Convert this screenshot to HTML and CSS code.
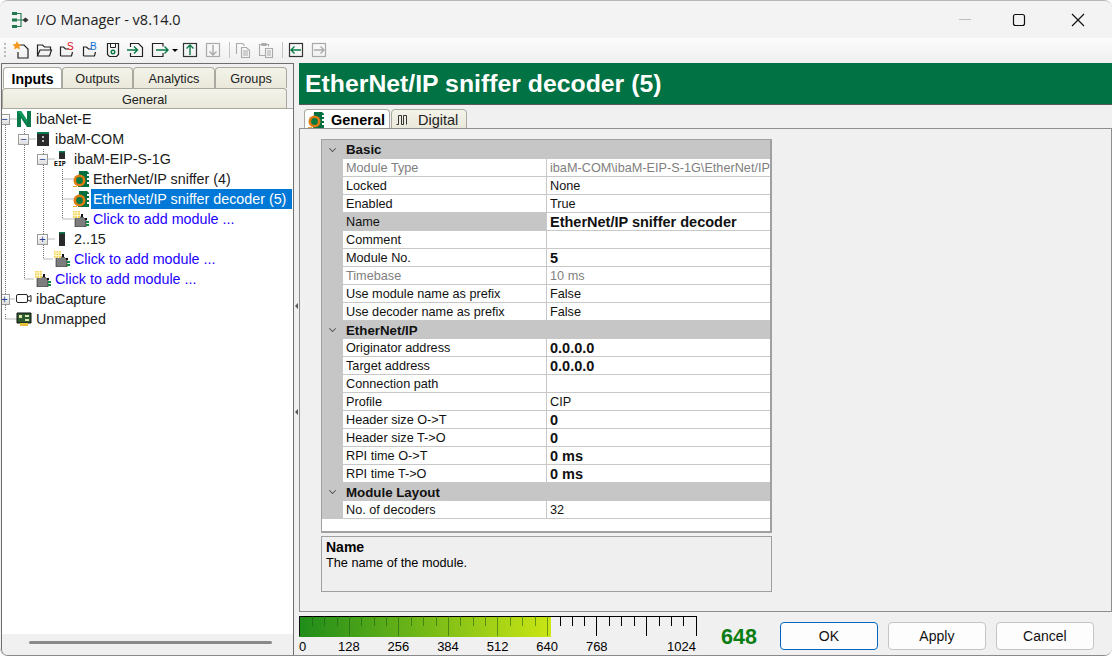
FILE: index.html
```html
<!DOCTYPE html>
<html lang="en">
<head>
    <meta charset="UTF-8">
    <meta name="viewport" content="width=device-width, initial-scale=1.0">
    <title>I/O Manager</title>
    <link rel="stylesheet" href="styles.css">
</head>
<body>
    <svg class="defs" width="0" height="0">
        <symbol id="chip" viewBox="0 0 16 16">
            <path d="M6 0h8l2 2v1h-2v2h2v2h-2v2h2v2h-2v2h2v3H5z" fill="#006f3f"/>
            <circle cx="6.500" cy="9.500" r="6" fill="#e07b10"/>
            <circle cx="6.500" cy="9.500" r="3.400" fill="#0b7a3f"/>
            <path d="M0 15h4v1H0z" fill="#e8a33a"/>
        </symbol>
        <symbol id="addmod" viewBox="0 0 16 16">
            <path d="M2 6h8l3 3v7H2z" fill="#7d7d7d" stroke="#222" stroke-width=".6"/>
            <path d="M8 3h2v3H8zM12 7h2v2h-2z" fill="#111"/>
            <path d="M13 10h3v2h-3zM13 13h3v2h-3z" fill="#0a8a3a"/>
            <path d="M0 0h7v7H0z" fill="#f4d35a"/>
            <path d="M0 2h7M0 4.500h7M2 0v7M4.500 0v7" stroke="#fff6c8"/>
        </symbol>
    </svg>

    <div class="window">
        <div class="titlebar">
            <svg class="app-icon" width="18" height="18" viewBox="0 0 18 18">
                <path d="M4 2.500h6v13H4M4 9h8" fill="none" stroke="#1e7a4c" stroke-width="1.100"/>
                <path d="M1 1h5v3H1zM1 7.500h5v3H1zM1 14h5v3H1z" fill="#1e7a4c"/>
                <path d="M11.500 9l3-2.500 3 2.500-3 2.500z" fill="#333"/>
            </svg>
            <span class="app-title">I/O Manager - v8.14.0</span>
            <div class="win-btns">
                <svg width="46" height="38" viewBox="0 0 46 38"><path d="M16 18.500h12" stroke="#bdbdbd"/></svg>
                <svg width="60" height="38" viewBox="0 0 60 38"><rect x="24.500" y="13.500" width="11" height="11" rx="2" fill="none" stroke="#111" stroke-width="1.200"/></svg>
                <svg width="58" height="38" viewBox="0 0 58 38"><path d="M23 13l12 12M35 13L23 25" stroke="#111" stroke-width="1.200"/></svg>
            </div>
        </div>

        <div class="toolbar">
            <span class="grip"></span>
            <svg class="tool" viewBox="0 0 20 20"><path d="M8 5h5l4 4v9H7v-6" fill="none" stroke="#222" stroke-width="1.200"/><path d="M6 1l1.500 3 3 .4-2.200 2.100.6 3L6 8l-2.900 1.500.6-3L1.500 4.400l3-.4z" fill="#f39a1e"/></svg>
            <svg class="tool" viewBox="0 0 20 20"><path d="M3.500 16V5h5l2 2h6v3M3.500 16h12l2-6H6l-2.500 6z" fill="none" stroke="#222" stroke-width="1.200"/></svg>
            <svg class="tool" viewBox="0 0 20 20"><path d="M3.500 16V7h3l2 2h3M3.500 16h11l1-4" fill="none" stroke="#222" stroke-width="1.200"/><text x="10" y="10" class="tool-s">S</text></svg>
            <svg class="tool" viewBox="0 0 20 20"><path d="M3.500 16V7h3l2 2h3M3.500 16h11l1-4" fill="none" stroke="#222" stroke-width="1.200"/><text x="10" y="10" class="tool-b">B</text></svg>
            <svg class="tool" viewBox="0 0 20 20"><path d="M4.500 3.500h11v11l-2 2h-7l-2-2z" fill="none" stroke="#222" stroke-width="1.200"/><path d="M7.500 3.500v4h5v-4" fill="none" stroke="#222"/><circle cx="10" cy="12" r="1.800" fill="none" stroke="#0a7a45" stroke-width="1.400"/></svg>
            <svg class="tool" viewBox="0 0 20 20"><path d="M4.500 7V3.500h8l4 4v9h-12V13" fill="none" stroke="#222" stroke-width="1.200"/><path d="M1 10h10M8 6.500l3.500 3.500L8 13.500" fill="none" stroke="#0a7a45" stroke-width="1.400"/></svg>
            <svg class="tool tool-wide" viewBox="0 0 20 20"><path d="M14 6.500V3.500H3.500v13H14V13" fill="none" stroke="#222" stroke-width="1.200"/><path d="M7 10h12M15.500 6.500L19 10l-3.500 3.500" fill="none" stroke="#0a7a45" stroke-width="1.400"/></svg>
            <span class="caret"></span>
            <svg class="tool" viewBox="0 0 20 20"><rect x="3.500" y="3.500" width="13" height="13" fill="none" stroke="#333" stroke-width="1.200"/><path d="M10 15V5M6.500 8.500L10 5l3.500 3.500" fill="none" stroke="#0a7a45" stroke-width="1.400"/></svg>
            <svg class="tool" viewBox="0 0 20 20"><rect x="3.500" y="3.500" width="13" height="13" fill="none" stroke="#aaa" stroke-width="1.200"/><path d="M10 5v10M6.500 11.500L10 15l3.500-3.500" fill="none" stroke="#aaa" stroke-width="1.400"/></svg>
            <span class="tool-sep"></span>
            <svg class="tool" viewBox="0 0 20 20"><path d="M3.500 14V3.500h6l2 2M8.500 7.500h5l3 3v7h-8z" fill="none" stroke="#aaa" stroke-width="1.100"/><path d="M10 11h5M10 13h5M10 15h5" stroke="#aaa"/></svg>
            <svg class="tool" viewBox="0 0 20 20"><path d="M9 15.500H3.500V4.500h9v2M6 3.500h4v2H6z" fill="none" stroke="#aaa" stroke-width="1.100"/><path d="M9.500 8.500h7v9h-7z" fill="none" stroke="#aaa" stroke-width="1.100"/><path d="M11 11h4M11 13h4M11 15h4" stroke="#aaa"/></svg>
            <span class="tool-sep"></span>
            <svg class="tool" viewBox="0 0 20 20"><rect x="3.500" y="3.500" width="13" height="13" fill="none" stroke="#333" stroke-width="1.200"/><path d="M15 10H5M8.500 6.500L5 10l3.500 3.500" fill="none" stroke="#0a7a45" stroke-width="1.400"/></svg>
            <svg class="tool" viewBox="0 0 20 20"><rect x="3.500" y="3.500" width="13" height="13" fill="none" stroke="#aaa" stroke-width="1.200"/><path d="M5 10h10M11.500 6.500L15 10l-3.500 3.500" fill="none" stroke="#aaa" stroke-width="1.400"/></svg>
        </div>

        <div class="workspace">
            <div class="left-panel">
                <div class="side-tabs">
                    <div class="side-tab active tab-inputs">Inputs</div>
                    <div class="side-tab tab-outputs">Outputs</div>
                    <div class="side-tab tab-analytics">Analytics</div>
                    <div class="side-tab tab-groups">Groups</div>
                </div>
                <div class="side-tab tab-general">General</div>

                <div class="tree">
                    <!-- dotted connectors sit over the rows -->
                    <svg class="tree-lines" width="290" height="230" viewBox="0 0 290 230">
                        <path d="M3.500 10V202M3.500 10h11M3.500 190h9M3.500 210V204M3.500 210h11M22.500 20V170M22.500 30h11M22.500 170h10M41.500 40V150M41.500 50h11M41.500 130h11M41.500 150h10M60.500 60V110M60.500 70h11M60.500 90h11M60.500 110h11" fill="none" stroke="#777" stroke-dasharray="1 1"/>
                    </svg>
                    <div class="tree-row lvl0">
                        <span class="expander">−</span>
                        <svg class="node-icon" viewBox="0 0 16 16"><path d="M1 0h4l6 9V0h4v16h-4L5 7v9H1z" fill="#0a7a4a"/><path d="M1 0h4l6 9 0 3z" fill="#0f9a5c"/></svg>
                        <span>ibaNet-E</span>
                    </div>
                    <div class="tree-row lvl1">
                        <span class="expander">−</span>
                        <svg class="node-icon" viewBox="0 0 16 16"><path d="M2 1h12v14H2z" fill="#2a2a2a"/><path d="M2 1h12v2H2z" fill="#0a7a4a"/><path d="M7 5h2v2H7zM7 9h2v2H7z" fill="#bbb"/></svg>
                        <span>ibaM-COM</span>
                    </div>
                    <div class="tree-row lvl2">
                        <span class="expander">−</span>
                        <svg class="node-icon icon-eip" viewBox="0 0 16 16"><path d="M5 0h6v8H5z" fill="#2a2a2a"/><path d="M5 0h6v1.500H5z" fill="#0a7a4a"/><text x="0" y="15" class="eip-text">EIP</text></svg>
                        <span>ibaM-EIP-S-1G</span>
                    </div>
                    <div class="tree-row lvl3">
                        <svg class="node-icon"><use href="#chip"/></svg>
                        <span>EtherNet/IP sniffer (4)</span>
                    </div>
                    <div class="tree-row lvl3">
                        <svg class="node-icon"><use href="#chip"/></svg>
                        <span class="selected">EtherNet/IP sniffer decoder (5)</span>
                    </div>
                    <div class="tree-row lvl3">
                        <svg class="node-icon"><use href="#addmod"/></svg>
                        <span class="add-link">Click to add module ...</span>
                    </div>
                    <div class="tree-row lvl2">
                        <span class="expander">+</span>
                        <svg class="node-icon" viewBox="0 0 16 16"><path d="M5 1h6v14H5z" fill="#2a2a2a"/><path d="M5 1h6v1.500H5z" fill="#0a7a4a"/></svg>
                        <span>2..15</span>
                    </div>
                    <div class="tree-row lvl2b">
                        <svg class="node-icon"><use href="#addmod"/></svg>
                        <span class="add-link">Click to add module ...</span>
                    </div>
                    <div class="tree-row lvl1b">
                        <svg class="node-icon"><use href="#addmod"/></svg>
                        <span class="add-link">Click to add module ...</span>
                    </div>
                    <div class="tree-row lvl0">
                        <span class="expander">+</span>
                        <svg class="node-icon" viewBox="0 0 16 16"><rect x=".5" y="3.500" width="11" height="8" rx="1.500" fill="#fff" stroke="#222"/><path d="M12 6l3-1.500v6L12 9" fill="none" stroke="#222"/></svg>
                        <span>ibaCapture</span>
                    </div>
                    <div class="tree-row lvl0b">
                        <svg class="node-icon" viewBox="0 0 16 16"><path d="M1 2h14v10H1z" fill="#2d5a2d" stroke="#111"/><path d="M3 4h3v3H3zM9 4h4v2H9zM9 8h4v2H9z" fill="#d9e8b0"/><path d="M4 12h8v3H4z" fill="#e5c23a"/></svg>
                        <span>Unmapped</span>
                    </div>
                </div>
                <div class="tree-scroll"><div class="tree-thumb"></div></div>
            </div>

            <div class="splitter">
                <span class="split-arrow"></span>
                <span class="split-arrow"></span>
            </div>

            <div class="right-panel">
                <div class="page-title">EtherNet/IP sniffer decoder (5)</div>
                <div class="page-tabs">
                    <div class="page-tab active">
                        <svg class="node-icon"><use href="#chip"/></svg>
                        <span>General</span>
                    </div>
                    <div class="page-tab">
                        <svg class="node-icon" viewBox="0 0 16 16"><path d="M1.500 12.500h2v-9h3v9h2v-9h3v9" fill="none" stroke="#333"/></svg>
                        <span>Digital</span>
                    </div>
                </div>
                <div class="page-body">
                    <div class="prop-grid">
                        <div class="cat cat-first"><span class="chev"></span>Basic</div>
                        <div class="row"><div class="key dim">Module Type</div><div class="val dim clip">ibaM-COM\ibaM-EIP-S-1G\EtherNet/IP sniffer decoder</div></div>
                        <div class="row"><div class="key">Locked</div><div class="val">None</div></div>
                        <div class="row"><div class="key">Enabled</div><div class="val">True</div></div>
                        <div class="row"><div class="key picked">Name</div><div class="val strong">EtherNet/IP sniffer decoder</div></div>
                        <div class="row"><div class="key">Comment</div><div class="val"></div></div>
                        <div class="row"><div class="key">Module No.</div><div class="val strong">5</div></div>
                        <div class="row"><div class="key dim">Timebase</div><div class="val dim">10 ms</div></div>
                        <div class="row"><div class="key">Use module name as prefix</div><div class="val">False</div></div>
                        <div class="row"><div class="key">Use decoder name as prefix</div><div class="val">False</div></div>
                        <div class="cat"><span class="chev"></span>EtherNet/IP</div>
                        <div class="row"><div class="key">Originator address</div><div class="val strong">0.0.0.0</div></div>
                        <div class="row"><div class="key">Target address</div><div class="val strong">0.0.0.0</div></div>
                        <div class="row"><div class="key">Connection path</div><div class="val"></div></div>
                        <div class="row"><div class="key">Profile</div><div class="val">CIP</div></div>
                        <div class="row"><div class="key">Header size O-&gt;T</div><div class="val strong">0</div></div>
                        <div class="row"><div class="key">Header size T-&gt;O</div><div class="val strong">0</div></div>
                        <div class="row"><div class="key">RPI time O-&gt;T</div><div class="val strong">0 ms</div></div>
                        <div class="row"><div class="key">RPI time T-&gt;O</div><div class="val strong">0 ms</div></div>
                        <div class="cat"><span class="chev"></span>Module Layout</div>
                        <div class="row"><div class="key">No. of decoders</div><div class="val">32</div></div>
                    </div>
                    <div class="help-box">
                        <div class="help-title">Name</div>
                        <div>The name of the module.</div>
                    </div>
                </div>
                <div class="bottom-bar">
                    <div class="meter">
                        <div class="meter-track">
                            <div class="meter-fill" style="width: 252px"></div>
                            <svg class="meter-ticks" width="398" height="22" viewBox="0 0 398 22" shape-rendering="crispEdges">
                                <path d="M0 .5h397.500" stroke="#000"/>
                                <path d="M13.500 0v10M25.500 0v10M38.500 0v10M62.500 0v10M75.500 0v10M87.500 0v10M112.500 0v10M124.500 0v10M137.500 0v10M161.500 0v10M174.500 0v10M186.500 0v10M211.500 0v10M223.500 0v10M236.500 0v10M50.500 0v20M99.500 0v20M149.500 0v20M198.500 0v20M248.500 0v20" stroke="#1e5a10" stroke-opacity=".55"/>
                                <path d="M.5 0v20" stroke="#111"/>
                                <path d="M261.500 0v10M273.500 0v10M285.500 0v10M310.500 0v10M322.500 0v10M335.500 0v10M360.500 0v10M372.500 0v10M384.500 0v10M297.500 0v20M347.500 0v20M397.500 0v20" stroke="#000"/>
                            </svg>
                        </div>
                        <div class="meter-labels">
                            <span class="lab-first">0</span><span class="lab">128</span><span class="lab">256</span><span class="lab">384</span><span class="lab">512</span><span class="lab">640</span><span class="lab">768</span><span class="lab-last">1024</span>
                        </div>
                    </div>
                    <div class="meter-value">648</div>
                    <button class="btn btn-default">OK</button>
                    <button class="btn">Apply</button>
                    <button class="btn">Cancel</button>
                </div>
            </div>
        </div>
    </div>
</body>
</html>
```

FILE: styles.css
```css
* {
    margin: 0;
    padding: 0;
    box-sizing: border-box;
}
html, body {
    height: 100%;
    overflow: hidden;
}
body {
    background-color: #fff;
    font-family: "Liberation Sans", Arial, sans-serif;
    font-size: 13px;
    color: #000;
}
.defs {
    position: absolute;
}
.window {
    width: 1112px;
    height: 656px;
    display: flex;
    flex-direction: column;
    background-color: #f0f0f0;
    border-top: 1px solid #b8b8b8;
    border-bottom: 1px solid #8a8a8a;
    border-radius: 8px;
    overflow: hidden;
}
.titlebar {
    height: 37px;
    display: flex;
    align-items: center;
    background-color: #f3f3f3;
    padding-left: 11px;
    flex: none;
}
.app-title {
    margin-left: 7px;
    font-family: "Open Sans", sans-serif;
    font-size: 14.5px;
    color: #222;
}
.win-btns {
    margin-left: auto;
    display: flex;
    margin-right: 5px;
}
.toolbar {
    height: 25px;
    display: flex;
    align-items: center;
    padding-left: 4px;
    padding-bottom: 1px;
    background: linear-gradient(#fdfdfd, #f4f4f4 60%, #efeff1);
    flex: none;
}
.grip {
    width: 2px;
    height: 15px;
    margin-right: 5px;
    background: repeating-linear-gradient(#bbb 0 2px, transparent 2px 4px);
}
.tool {
    width: 20px;
    height: 20px;
    margin-right: 3px;
    flex: none;
    overflow: visible;
}
.tool-s, .tool-b {
    font-family: "Liberation Sans", sans-serif;
    font-size: 10px;
}
.tool-s {
    fill: #e0101a;
}
.tool-b {
    fill: #0a6fd0;
}
.caret {
    width: 0;
    height: 0;
    border: 3px solid transparent;
    border-top: 3px solid #000;
    border-bottom: 0;
    margin-right: 2px;
}
.tool-sep {
    width: 1px;
    height: 16px;
    background-color: #c4c4c4;
    margin: 0 3px;
}
.workspace {
    flex: 1;
    display: flex;
    min-height: 0;
}
.left-panel {
    width: 293px;
    margin-left: 1px;
    flex: none;
    border: 1px solid #6e6e6e;
    border-bottom: 0;
    border-radius: 0 0 0 6px;
    background-color: #f0f0f0;
    display: flex;
    flex-direction: column;
    padding-top: 3px;
}
.side-tabs {
    display: flex;
    padding-left: 1px;
    height: 21px;
}
.side-tab {
    text-align: center;
    font-size: 12.7px;
    line-height: 22px;
    color: #222;
    background: linear-gradient(#f4f3ea, #e9e8da);
    border: 1px solid #a9a9a0;
    border-bottom: 0;
    border-radius: 4px 4px 0 0;
}
.side-tab.active {
    background: #fff;
    font-size: 14px;
    font-weight: bold;
    color: #000;
}
.tab-inputs {
    width: 59px;
}
.tab-outputs {
    width: 71px;
}
.tab-analytics {
    width: 82px;
}
.tab-groups {
    width: 72px;
}
.tab-general {
    width: 285px;
    height: 20px;
    line-height: 22px;
}
.tree {
    position: relative;
    flex: 1;
    background-color: #fff;
    border-top: 1px solid #a9a9a0;
    font-size: 14.3px;
    overflow: hidden;
}
.tree-lines {
    position: absolute;
    top: 0;
    left: 0;
}
.tree-row {
    position: relative;
    height: 20px;
    display: flex;
    align-items: center;
    gap: 4px;
    color: #1a1a1a;
}
.lvl0 .expander {
    margin-left: -3px;
}
.lvl0b {
    padding-left: 14px;
}
.lvl1 {
    padding-left: 16px;
}
.lvl1b {
    padding-left: 33px;
}
.lvl2 {
    padding-left: 35px;
}
.lvl2b {
    padding-left: 52px;
}
.lvl3 {
    padding-left: 71px;
}
.expander {
    width: 11px;
    height: 11px;
    border: 1px solid #9a9a9a;
    background: linear-gradient(#fff, #ddd);
    color: #2a3f8f;
    font-size: 11px;
    line-height: 8px;
    text-align: center;
    margin-right: 2px;
    flex: none;
}
.node-icon {
    width: 16px;
    height: 16px;
    flex: none;
}
.icon-eip {
    overflow: visible;
}
.eip-text {
    font-family: "Liberation Mono", monospace;
    font-size: 6.500px;
    font-weight: bold;
}
.selected {
    background-color: #0078d7;
    color: #fff;
    padding: 0 2px;
    margin-left: -2px;
    width: 201px;
    line-height: 20px;
    white-space: nowrap;
}
.add-link {
    color: #1d00ff;
}
.tree-scroll {
    height: 21px;
    flex: none;
    background-color: #f0f0f0;
    padding: 7px 21px 0 27px;
    border-radius: 0 0 0 6px;
}
.tree-thumb {
    height: 3px;
    border-radius: 2px;
    background-color: #8a8a8a;
}
.splitter {
    width: 5px;
    flex: none;
    display: flex;
    flex-direction: column;
    justify-content: center;
    gap: 100px;
    align-items: center;
}
.split-arrow {
    width: 0;
    height: 0;
    border: 3px solid transparent;
    border-right: 3px solid #555;
    border-left: 0;
}
.right-panel {
    flex: 1;
    min-width: 0;
    display: flex;
    flex-direction: column;
}
.page-title {
    height: 42px;
    flex: none;
    background-color: #007243;
    color: #fff;
    font-size: 24.800px;
    font-weight: bold;
    line-height: 41px;
    padding-left: 6px;
    border-bottom: 1px solid #5a5a5a;
}
.page-tabs {
    height: 24px;
    display: flex;
    align-items: flex-end;
    padding-left: 5px;
    flex: none;
}
.page-tab {
    height: 20px;
    display: flex;
    align-items: center;
    gap: 7px;
    padding: 2px 8px 0 3px;
    background: linear-gradient(#f4f3ea, #e9e8da);
    border: 1px solid #a9a9a0;
    border-bottom: 1px solid #a9a9a0;
    border-radius: 4px 4px 0 0;
    font-size: 14.500px;
    color: #222;
}
.page-tab.active {
    background-color: #fff;
    background-image: none;
    border-bottom-color: #fff;
    font-weight: bold;
    color: #000;
    padding-right: 4px;
    margin-right: 1px;
}
.page-body {
    flex: 1;
    min-height: 0;
    border: 1px solid #8e8e8e;
    margin-top: -1px;
    background-color: #f0f0f0;
    padding: 10px 0 0 21px;
}
.prop-grid {
    width: 451px;
    height: 394px;
    background-color: #fff;
    border-style: solid;
    border-color: #a0a0a0;
    border-width: 1px 2px 2px 1px;
}
.cat {
    height: 18px;
    display: flex;
    align-items: center;
    background-color: #c6c6c6;
    font-weight: bold;
    font-size: 13.300px;
    color: #111;
}
.cat-first {
    height: 19px;
}
.chev {
    width: 7px;
    height: 7px;
    margin: 0 10px 3px 7px;
    border-right: 1px solid #333;
    border-bottom: 1px solid #333;
    transform: rotate(45deg) scale(.7);
    flex: none;
}
.row {
    height: 18px;
    display: flex;
    border-left: 21px solid #c6c6c6;
    border-bottom: 1px solid #c8c8c8;
    font-size: 12.700px;
    line-height: 19px;
}
.key {
    width: 204px;
    padding-left: 3px;
    border-right: 1px solid #c8c8c8;
    flex: none;
    color: #111;
}
.val {
    flex: 1;
    min-width: 0;
    padding-left: 3px;
    color: #111;
}
.picked {
    background-color: #c6c6c6;
}
.strong {
    font-weight: bold;
    font-size: 14.500px;
    white-space: nowrap;
}
.dim {
    color: #7f7f7f;
}
.clip {
    white-space: nowrap;
    overflow: hidden;
}
.help-box {
    width: 451px;
    height: 56px;
    margin-top: 3px;
    border: 1px solid #a0a0a0;
    padding: 2px 4px;
    font-size: 12.700px;
    line-height: 16px;
    background-color: #efefef;
}
.help-title {
    font-weight: bold;
    font-size: 14px;
}
.bottom-bar {
    height: 43px;
    flex: none;
    display: flex;
    align-items: flex-start;
    background-color: #f0f0f0;
}
.meter {
    width: 398px;
    margin-top: 4px;
    flex: none;
}
.meter-track {
    position: relative;
    height: 21px;
    padding-top: 1px;
}
.meter-fill {
    height: 20px;
    background: linear-gradient(90deg, #1e8c1a, #cbe614);
}
.meter-ticks {
    position: absolute;
    top: 0;
    left: 0;
}
.meter-labels {
    display: flex;
    font-size: 13px;
    line-height: 16px;
    margin-top: 2px;
}
.lab-first {
    width: 25px;
}
.lab {
    width: 49.600px;
    text-align: center;
}
.lab-last {
    flex: 1;
    text-align: right;
    padding-right: 1px;
}
.meter-value {
    margin: 13px 23px 0 24px;
    color: #0a7d12;
    font-size: 21.500px;
    font-weight: bold;
    line-height: 24px;
}
.btn {
    width: 98px;
    height: 28px;
    margin-top: 10px;
    margin-right: 10px;
    background-color: #fdfdfd;
    border: 1px solid #c4c4c4;
    border-radius: 4px;
    font-family: "Liberation Sans", sans-serif;
    font-size: 14px;
    color: #111;
}
.btn-default {
    border: 1.500px solid #0067c0;
}
```
